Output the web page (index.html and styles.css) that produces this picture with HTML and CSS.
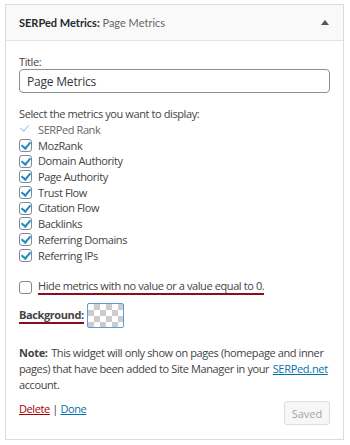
FILE: index.html
```html
<!DOCTYPE html>
<html lang="en">
<head>
  <meta charset="UTF-8" />
  <title>SERPed Metrics Widget</title>
  <link rel="stylesheet" href="styles.css">
</head>
<body>
  <div class="widget">
    <div class="widget-top">
      <h3><strong>SERPed Metrics:</strong> <span class="in-title">Page Metrics</span></h3>
      <span class="toggle-arrow"></span>
    </div>

    <div class="widget-inside">
      <p class="field">
        <label for="title">Title:</label>
        <input type="text" id="title" value="Page Metrics" />
      </p>

      <p class="metrics-intro">Select the metrics you want to display:</p>
      <ul class="metrics">
        <li class="locked"><span class="check"></span>SERPed Rank</li>
        <li><span class="check box"></span>MozRank</li>
        <li><span class="check box"></span>Domain Authority</li>
        <li><span class="check box"></span>Page Authority</li>
        <li><span class="check box"></span>Trust Flow</li>
        <li><span class="check box"></span>Citation Flow</li>
        <li><span class="check box"></span>Backlinks</li>
        <li><span class="check box"></span>Referring Domains</li>
        <li><span class="check box"></span>Referring IPs</li>
      </ul>

      <p class="hide-row">
        <span class="box empty"></span>
        <span class="marked">Hide metrics with no value or a value equal to 0.</span>
      </p>

      <div class="bg-row">
        <span class="marked bold">Background:</span>
        <span class="swatch"></span>
      </div>

      <p class="note"><strong>Note:</strong> This widget will only show on pages (homepage and inner pages) that have been added to Site Manager in your <a href="#">SERPed.net</a> account.</p>

      <div class="widget-control">
        <div class="links"><a href="#" class="delete">Delete</a> | <a href="#">Done</a></div>
        <button class="saved" disabled>Saved</button>
      </div>
    </div>
  </div>
</body>
</html>
```

FILE: styles.css
```css
body {
  margin: 0;
  padding: 4px 6px 0 5px;
  background: #fff;
  font-family: "Open Sans", sans-serif;
  font-size: 11px;
  letter-spacing: -0.4px;
  color: #444;
}

.widget {
  border: 1px solid #dcdcde;
  background: #fff;
}

.widget-top {
  height: 35px;
  background: #f9f9f9;
  border-bottom: 1px solid #e2e4e7;
  display: flex;
  align-items: center;
  justify-content: space-between;
  padding: 0 14px 0 13px;
}

.widget-top h3 {
  margin: 0;
  font-family: Lato, sans-serif;
  font-size: 11px;
  letter-spacing: 0;
  color: #23282d;
}

.widget-top h3 strong {
  font-weight: 700;
}

.in-title {
  color: #666;
  font-weight: 400;
}

.toggle-arrow {
  width: 0;
  height: 0;
  border-left: 4px solid transparent;
  border-right: 4px solid transparent;
  border-bottom: 5px solid #555;
}

.widget-inside {
  padding: 14px 13px 14px 13px;
}

.field {
  margin: 0 0 13px;
}

.field label {
  display: block;
  line-height: 14px;
}

input[type="text"] {
  box-sizing: border-box;
  width: 100%;
  height: 24px;
  padding: 0 7px;
  font-family: inherit;
  font-size: 12px;
  letter-spacing: -0.2px;
  color: #32373c;
  border: 1px solid #8c8f94;
  border-radius: 4px;
  outline: none;
}

.metrics-intro {
  margin: 0;
  line-height: 16px;
}

.metrics {
  list-style: none;
  margin: 0;
  padding: 0;
}

.metrics li {
  display: flex;
  align-items: center;
  gap: 6px;
  height: 15.7px;
  line-height: 15.7px;
}

.check {
  position: relative;
  box-sizing: border-box;
  width: 13px;
  height: 13px;
  flex: none;
}

.check.box {
  border: 1px solid #7e8993;
  border-radius: 3px;
}

.check::after {
  content: "";
  position: absolute;
  left: 3px;
  top: 0;
  width: 4px;
  height: 7px;
  border-right: 2px solid #1e8cbe;
  border-bottom: 2px solid #1e8cbe;
  transform: rotate(40deg);
}

.locked .check::after {
  border-color: #9bc8de;
  border-width: 0 1.5px 1.5px 0;
}

.locked {
  color: #666;
}

.hide-row {
  display: flex;
  align-items: center;
  gap: 6px;
  margin: 16px 0 0;
}

.box.empty {
  box-sizing: border-box;
  width: 13px;
  height: 13px;
  border: 1px solid #7e8993;
  border-radius: 3px;
}

.marked {
  border-bottom: 2px solid #8b0d1e;
  line-height: 14px;
}

.bold {
  font-weight: 700;
}

.bg-row {
  display: flex;
  align-items: center;
  gap: 3px;
  margin-top: 8px;
}

.swatch {
  width: 35px;
  height: 23px;
  border: 1px solid #5b9dd9;
  border-radius: 2px;
  background-color: #fff;
  background-image:
    linear-gradient(45deg, #ccc 25%, transparent 25%, transparent 75%, #ccc 75%),
    linear-gradient(45deg, #ccc 25%, transparent 25%, transparent 75%, #ccc 75%);
  background-size: 12px 12px;
  background-position: 0 0, 6px 6px;
}

.note {
  margin: 17px 0 0;
  line-height: 16px;
}

.note strong {
  letter-spacing: -0.3px;
  margin-right: 1px;
}

.note a {
  color: #0073aa;
  letter-spacing: -0.3px;
  margin-left: 1px;
}

.widget-control {
  display: flex;
  justify-content: space-between;
  align-items: flex-start;
  margin-top: 8px;
}

.links {
  line-height: 16px;
}

.links a {
  color: #0073aa;
}

.links a.delete {
  color: #a00;
}

.saved {
  width: 46px;
  height: 24px;
  padding: 0;
  font-family: inherit;
  font-size: 11px;
  color: #a0a5aa;
  background: #f7f7f7;
  border: 1px solid #ddd;
  border-radius: 3px;
}
```
